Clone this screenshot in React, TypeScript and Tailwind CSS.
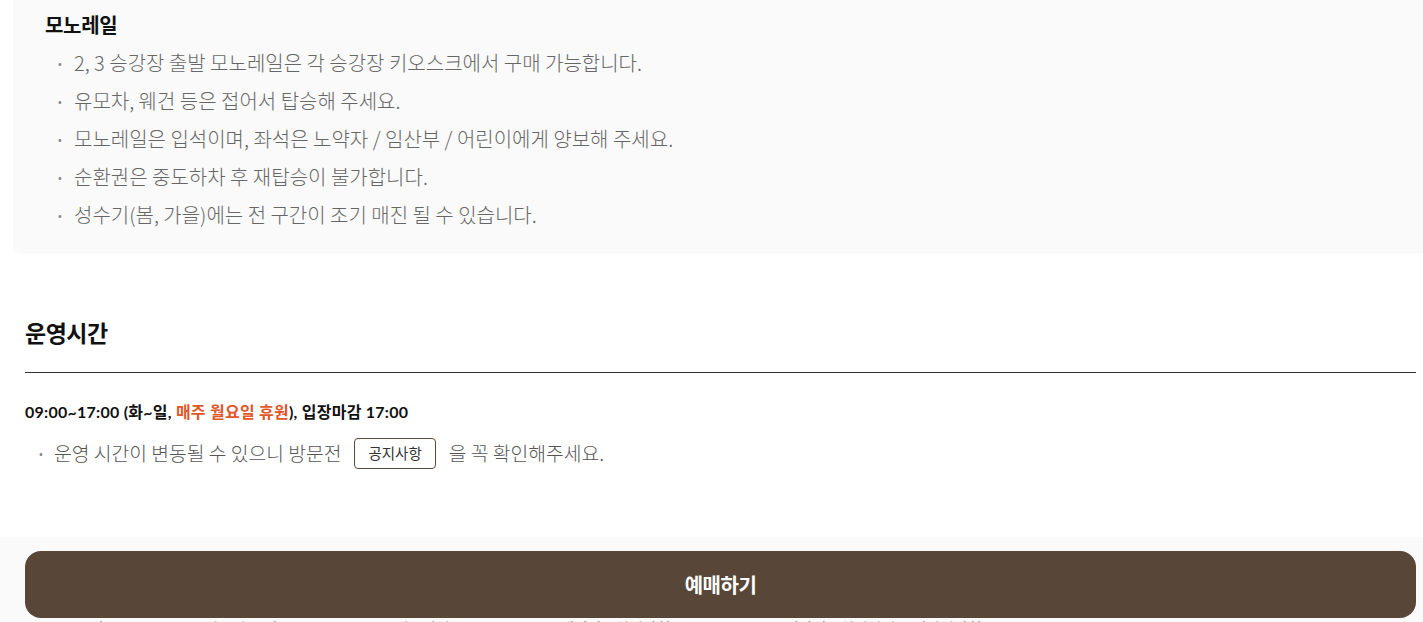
const FONT = { fontFamily: '"Noto Sans CJK KR", "Noto Sans", sans-serif' };
const LATO = { fontFamily: 'Lato, "Noto Sans CJK KR", sans-serif' };

const MONORAIL = [
  '2, 3 승강장 출발 모노레일은 각 승강장 키오스크에서 구매 가능합니다.',
  '유모차, 웨건 등은 접어서 탑승해 주세요.',
  '모노레일은 입석이며, 좌석은 노약자 / 임산부 / 어린이에게 양보해 주세요.',
  '순환권은 중도하차 후 재탑승이 불가합니다.',
  '성수기(봄, 가을)에는 전 구간이 조기 매진 될 수 있습니다.',
];

const FOOTER_LINKS = [
  { label: '오시는 길', w: 'w-[160px]' },
  { label: '자주하는 질문', w: 'w-[190px]' },
  { label: '이용약관', w: 'w-[165px]' },
  { label: '개인정보처리방침', w: 'w-[225px]' },
  { label: '영상정보처리기기 운영관리방침', w: 'w-auto' },
];

export default function App() {
  return (
    <div className="bg-white text-[#222] min-h-screen" style={FONT}>
      {/* Monorail notice box */}
      <div className="ml-[13px] bg-[#fafafa] rounded-bl-lg pt-[12px] pb-[20px] pl-[32px]">
        <h4 className="text-[20px] font-bold leading-[26px] text-[#111] tracking-[-0.3px]">모노레일</h4>
        <ul className="mt-[6px]">
          {MONORAIL.map(t => (
            <li key={t} className="flex items-center h-[38px] text-[20px] font-light text-[#666]">
              <span className="w-[29px] pl-[13px] text-[12px] text-[#888]">•</span>
              <span>{t}</span>
            </li>
          ))}
        </ul>
      </div>

      {/* Operating hours */}
      <section className="px-[25px] pt-[60px] pr-[7px]">
        <h3 className="text-[23px] font-bold leading-[36px] text-[#111] tracking-[-0.5px]">운영시간</h3>
        <div className="mt-[22px] border-t border-[#333]" />
        <p className="mt-[27px] text-[16px] font-bold text-[#111] leading-[24px] tracking-[0.25px]" style={LATO}>
          09:00~17:00 (화~일, <span className="text-[#e0582a]">매주 월요일 휴원</span>), 입장마감 17:00
        </p>
        <div className="mt-[10px] flex items-center h-[38px] text-[19.3px] font-light text-[#555]">
          <span className="w-[29px] pl-[14px] text-[12px] text-[#888]">•</span>
          <span>운영 시간이 변동될 수 있으니 방문전</span>
          <button className="mx-[13px] h-[31px] px-[13px] border border-[#5a4a3b] rounded-[4px] text-[14.5px] font-normal text-[#333] bg-white">
            공지사항
          </button>
          <span>을 꼭 확인해주세요.</span>
        </div>
      </section>

      {/* Footer */}
      <footer className="mt-[65px] bg-[#fafafa] pt-[80px] pb-[40px] px-[45px]">
        <ul className="flex text-[15px] text-[#555]">
          {FOOTER_LINKS.map(l => (
            <li key={l.label} className={l.w}>{l.label}</li>
          ))}
        </ul>
      </footer>

      {/* Fixed reservation button */}
      <button className="fixed left-[25px] right-[7px] bottom-[4px] h-[67px] rounded-[16px] bg-[#584739] text-white text-[20px] font-bold tracking-[-0.5px]">
        예매하기
      </button>
    </div>
  );
}
